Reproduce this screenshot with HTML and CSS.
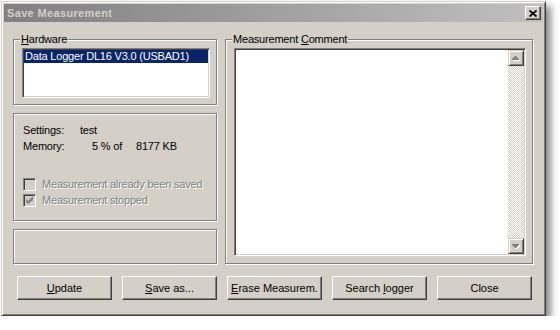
FILE: index.html
```html
<!DOCTYPE html>
<html lang="en">
<head>
  <meta charset="UTF-8" />
  <title>Save Measurement</title>
  <link rel="stylesheet" href="styles.css">
</head>
<body>
  <div class="window">
    <div class="titlebar">
      <span class="title">Save Measurement</span>
      <button class="close" type="button" aria-label="Close">
        <svg width="8" height="7" viewBox="0 0 8 7"><path d="M0.5 0.5L7.5 6.5M7.5 0.5L0.5 6.5" stroke="#000" stroke-width="1.7" fill="none"/></svg>
      </button>
    </div>

    <div class="content">
      <div class="main">
        <div class="left">
          <!-- Hardware list -->
          <div class="group hardware">
            <div class="legend"><u>H</u>ardware</div>
            <div class="listbox">
              <div class="item selected">Data Logger DL16 V3.0 (USBAD1)</div>
            </div>
          </div>

          <!-- Logger info -->
          <div class="group settings">
            <div class="info">
              <span>Settings:</span><span class="wide">test</span>
              <span>Memory:</span><span class="pct">5 % of</span><span>8177 KB</span>
            </div>
            <div class="checks">
              <label class="check"><span class="box"></span>Measurement already been saved</label>
              <label class="check"><span class="box"><svg width="7" height="7" viewBox="0 0 7 7"><polygon points="0,2 2,4 6,0 7,0 7,3 2,7 0,5" fill="#808080"/></svg></span>Measurement stopped</label>
            </div>
          </div>

          <div class="group status"></div>
        </div>

        <!-- Comment memo -->
        <div class="group comment">
          <div class="legend">Measurement <u>C</u>omment</div>
          <div class="memo">
            <div class="memo-text"></div>
            <div class="scrollbar">
              <div class="sb-btn">
                <svg width="8" height="5" viewBox="0 0 8 5"><polygon points="4,1 5,1 8,4 8,5 1,5 1,4" fill="#fff"/><polygon points="3,0 4,0 7,3 7,4 0,4 0,3" fill="#808080"/></svg>
              </div>
              <div class="sb-track"></div>
              <div class="sb-btn">
                <svg width="8" height="5" viewBox="0 0 8 5"><polygon points="1,1 8,1 8,2 5,5 4,5 1,2" fill="#fff"/><polygon points="0,0 7,0 7,1 4,4 3,4 0,1" fill="#808080"/></svg>
              </div>
            </div>
          </div>
        </div>
      </div>

      <div class="buttons">
        <button class="btn" type="button"><u>U</u>pdate</button>
        <button class="btn" type="button"><u>S</u>ave as...</button>
        <button class="btn" type="button"><u>E</u>rase Measurem.</button>
        <button class="btn" type="button">Search <u>l</u>ogger</button>
        <button class="btn" type="button">Close</button>
      </div>
    </div>
  </div>
</body>
</html>
```

FILE: styles.css
```css
* {
  margin: 0;
  padding: 0;
  box-sizing: border-box;
}
body {
  background: #fff;
  font-family: "Liberation Sans", Arial, sans-serif;
  font-size: 11px;
  letter-spacing: -0.2px;
  color: #000;
}
.window {
  margin: 1px 0 0 1px;
  width: 545px;
  height: 315px;
  padding: 2px;
  background: #d4d0c8;
  border: 1px solid;
  border-color: #d4d0c8 #404040 #404040 #d4d0c8;
  box-shadow: inset 1px 1px #fff, inset -1px -1px #808080, 5px 5px 7px rgba(0, 0, 0, 0.45);
  display: flex;
  flex-direction: column;
}
.titlebar {
  height: 18px;
  padding: 0 2px 0 3px;
  background: linear-gradient(to right, #808080, #c0c0c0);
  display: flex;
  align-items: center;
  justify-content: space-between;
}
.title {
  color: #d4d0c8;
  font-weight: bold;
  letter-spacing: 0.35px;
}
.close {
  width: 16px;
  height: 14px;
  background: #d4d0c8;
  border: 1px solid;
  border-color: #fff #404040 #404040 #fff;
  box-shadow: inset -1px -1px #808080;
  display: flex;
  align-items: center;
  justify-content: center;
}
.content {
  flex: 1;
  padding: 17px 0 0 9px;
}
.main {
  display: flex;
  gap: 8px;
}
.left {
  width: 204px;
  display: flex;
  flex-direction: column;
  gap: 8px;
}
.group {
  border: 1px solid #808080;
  box-shadow: 1px 1px #fff, inset 1px 1px #fff;
}
.legend {
  width: fit-content;
  margin: -7px 0 0 6px;
  padding: 0 1px;
  background: #d4d0c8;
  line-height: 13px;
}
.hardware {
  height: 66px;
}
.listbox {
  margin: 2px 0 0 8px;
  width: 188px;
  height: 50px;
  padding: 1px;
  background: #fff;
  border: 1px solid;
  border-color: #808080 #fff #fff #808080;
  box-shadow: inset 1px 1px #404040, inset -1px -1px #d4d0c8;
}
.item {
  line-height: 13px;
  padding-left: 1px;
}
.item.selected {
  background: #0a246a;
  color: #fff;
}
.settings {
  height: 108px;
  padding: 8px 0 0 9px;
}
.info {
  display: grid;
  grid-template-columns: 57px 56px auto;
  line-height: 16px;
}
.info .wide {
  grid-column: span 2;
}
.info .pct {
  padding-left: 12px;
}
.checks {
  margin-top: 22px;
}
.check {
  display: flex;
  align-items: center;
  height: 16px;
  color: #808080;
  text-shadow: 1px 1px #fff;
}
.box {
  width: 13px;
  height: 13px;
  margin-right: 6px;
  background: #d4d0c8;
  border: 1px solid;
  border-color: #808080 #fff #fff #808080;
  box-shadow: inset 1px 1px #404040, inset -1px -1px #d4d0c8;
  display: flex;
  align-items: center;
  justify-content: center;
}
.status {
  height: 35px;
}
.comment {
  width: 308px;
  height: 225px;
}
.memo {
  margin: 2px 0 0 8px;
  width: 292px;
  height: 208px;
  padding: 1px;
  display: flex;
  background: #fff;
  border: 1px solid;
  border-color: #808080 #fff #fff #808080;
  box-shadow: inset 1px 1px #404040, inset -1px -1px #d4d0c8;
}
.memo-text {
  flex: 1;
}
.scrollbar {
  width: 16px;
  display: flex;
  flex-direction: column;
}
.sb-track {
  flex: 1;
  background: repeating-conic-gradient(#d4d0c8 0 25%, #fff 0 50%) 0 0 / 2px 2px;
}
.sb-btn {
  height: 16px;
  background: #d4d0c8;
  border: 1px solid;
  border-color: #d4d0c8 #404040 #404040 #d4d0c8;
  box-shadow: inset 1px 1px #fff, inset -1px -1px #808080;
  display: flex;
  align-items: center;
  justify-content: center;
}
.buttons {
  display: flex;
  gap: 10px;
  margin: 12px 0 0 4px;
}
.btn {
  width: 95px;
  height: 24px;
  font: inherit;
  color: #000;
  background: #d4d0c8;
  border: 1px solid;
  border-color: #fff #404040 #404040 #fff;
  box-shadow: inset -1px -1px #808080;
}
```
